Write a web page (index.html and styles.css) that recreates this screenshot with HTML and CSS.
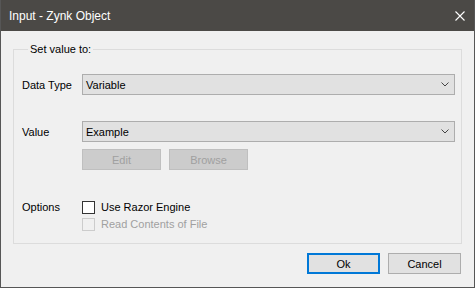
FILE: index.html
```html
<!DOCTYPE html>
<html lang="en">
<head>
    <meta charset="UTF-8">
    <title>Input - Zynk Object</title>
    <link rel="stylesheet" href="styles.css">
</head>
<body>
    <div class="window">
        <div class="titlebar">
            <span class="title">Input - Zynk Object</span>
            <svg class="close" width="10" height="10" viewBox="0 0 10 10">
                <path d="M0.5 0.5 L9.5 9.5 M9.5 0.5 L0.5 9.5" stroke="#ffffff" stroke-width="1.1" fill="none"/>
            </svg>
        </div>
        <div class="content">
            <fieldset class="group">
                <legend>Set value to:</legend>
                <div class="row row-type">
                    <span class="label">Data Type</span>
                    <div class="combo">
                        <span>Variable</span>
                        <svg width="8" height="5" viewBox="0 0 8 5"><polyline points="0.5,0.5 4,4 7.5,0.5" stroke="#444" fill="none"/></svg>
                    </div>
                </div>
                <div class="row row-value">
                    <span class="label">Value</span>
                    <div class="combo">
                        <span>Example</span>
                        <svg width="8" height="5" viewBox="0 0 8 5"><polyline points="0.5,0.5 4,4 7.5,0.5" stroke="#444" fill="none"/></svg>
                    </div>
                </div>
                <div class="row row-buttons">
                    <span class="label"></span>
                    <button class="btn btn-disabled" disabled>Edit</button>
                    <button class="btn btn-disabled" disabled>Browse</button>
                </div>
                <div class="row row-check">
                    <span class="label">Options</span>
                    <span class="check"></span>
                    <span class="check-text">Use Razor Engine</span>
                </div>
                <div class="row row-check row-check2">
                    <span class="label"></span>
                    <span class="check check-disabled"></span>
                    <span class="check-text check-text-disabled">Read Contents of File</span>
                </div>
            </fieldset>
            <div class="footer">
                <button class="btn btn-default">Ok</button>
                <button class="btn">Cancel</button>
            </div>
        </div>
    </div>
</body>
</html>
```

FILE: styles.css
```css
body {
    margin: 0;
    padding: 0;
    font-family: "Liberation Sans", Arial, sans-serif;
    font-size: 11px;
    color: #000;
    background-color: #f0f0f0;
}
.window {
    width: 475px;
    height: 288px;
    box-sizing: border-box;
    border: 1px solid #565656;
    border-top: none;
    background-color: #f0f0f0;
}
.titlebar {
    height: 31px;
    background-color: #4b4946;
    display: flex;
    align-items: center;
    justify-content: space-between;
    padding: 0 9px 0 8px;
}
.title {
    color: #fff;
    font-size: 12px;
    line-height: 14px;
}
.close {
    display: block;
}
.content {
    padding: 0 12px;
}
.group {
    margin: 11px 0 0;
    padding: 0 6px 12px 8px;
    border: 1px solid #dcdcdc;
    min-width: 0;
}
.group legend {
    margin-left: 6px;
    padding: 0 2px;
    line-height: 14px;
}
.row {
    display: flex;
    align-items: center;
}
.label {
    width: 60px;
    flex: none;
}
.row-type {
    margin-top: 18px;
}
.row-value {
    margin-top: 26px;
}
.row-buttons {
    margin-top: 7px;
    gap: 0;
}
.combo {
    flex: 1;
    height: 21px;
    box-sizing: border-box;
    border: 1px solid #adadad;
    background-color: #e1e1e1;
    display: flex;
    align-items: center;
    justify-content: space-between;
    padding: 0 5px 0 3px;
}
.combo svg {
    display: block;
}
.btn {
    width: 73px;
    height: 21px;
    box-sizing: border-box;
    border: 1px solid #adadad;
    background-color: #e1e1e1;
    font-family: inherit;
    font-size: 11px;
    color: #000;
    padding: 0;
}
.btn-disabled {
    width: 79px;
    background-color: #cccccc;
    border-color: #bfbfbf;
    color: #a0a0a0;
}
.btn-disabled + .btn-disabled {
    margin-left: 8px;
}
.btn-default {
    border: 2px solid #0078d7;
}
.row-check {
    margin-top: 31px;
    height: 13px;
    line-height: 13px;
}
.row-check2 {
    margin-top: 4px;
}
.check {
    width: 13px;
    height: 13px;
    box-sizing: border-box;
    border: 1px solid #333;
    background-color: #fff;
    flex: none;
}
.check-disabled {
    border-color: #cccccc;
    background-color: #f0f0f0;
}
.check-text {
    margin-left: 6px;
}
.check-text-disabled {
    color: #a0a0a0;
}
.footer {
    display: flex;
    justify-content: flex-end;
    gap: 8px;
    margin: 9px 1px 0 0;
}
```
